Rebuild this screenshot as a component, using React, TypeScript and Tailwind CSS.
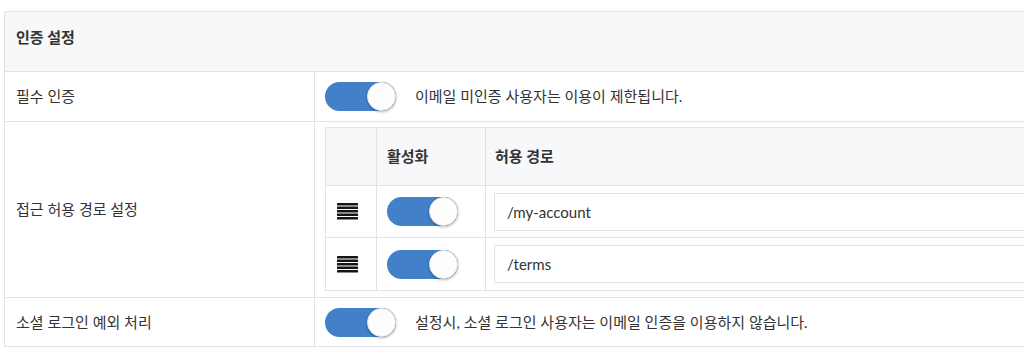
import React from 'react';

const border = 'border-[#e3e3e3]';

function Toggle() {
  return (
    <div className="flex h-[29px] w-[71px] justify-end rounded-full bg-[#4281c9]">
      <div className="h-[29px] w-[29px] rounded-full border border-[#e6e6e6] bg-[#fdfdfd] shadow-[0_1px_3px_rgba(0,0,0,0.3)]" />
    </div>
  );
}

function DragHandle() {
  return (
    <svg width="21" height="17" viewBox="0 0 21 17" fill="#151515">
      {[0, 3.5, 7, 10.5, 14].map((y) => (
        <rect key={y} x="0" y={y} width="21" height="2.5" rx="0.5" />
      ))}
    </svg>
  );
}

const paths = ['/my-account', '/terms'];

export default function App() {
  return (
    <div className="h-[358px] w-full overflow-hidden bg-white font-['Lato','Noto_Sans_CJK_KR',sans-serif] text-[15px] text-[#333]">
      <div className={`ml-[4px] mt-[11px] w-[1100px] border ${border}`}>
        {/* header */}
        <div className={`h-[60px] border-b ${border} bg-[#f7f8fa] pl-[11px] pt-[14px] font-bold leading-[22px]`}>
          인증 설정
        </div>

        {/* 필수 인증 */}
        <div className={`flex h-[50px] border-b ${border}`}>
          <div className={`flex w-[310px] items-center border-r ${border} pl-[11px]`}>필수 인증</div>
          <div className="flex items-center gap-[19px] pl-[10px]">
            <Toggle />
            <span>이메일 미인증 사용자는 이용이 제한됩니다.</span>
          </div>
        </div>

        {/* 접근 허용 경로 설정 */}
        <div className={`flex border-b ${border}`}>
          <div className={`flex w-[310px] items-center border-r ${border} pl-[11px]`}>접근 허용 경로 설정</div>
          <div className="flex-1 pb-[6px] pl-[10px] pt-[5px]">
            <div className={`border ${border}`}>
              <div className={`flex h-[58px] border-b ${border} bg-[#f7f8fa] font-bold`}>
                <div className={`w-[51px] border-r ${border}`} />
                <div className={`flex w-[109px] items-center border-r ${border} pl-[10px]`}>활성화</div>
                <div className="flex items-center pl-[9px]">허용 경로</div>
              </div>
              {paths.map((p, i) => (
                <div key={p} className={`flex h-[52px] ${i === 0 ? `border-b ${border}` : ''}`}>
                  <div className={`flex w-[51px] items-center border-r ${border} pl-[11px]`}>
                    <DragHandle />
                  </div>
                  <div className={`flex w-[109px] items-center border-r ${border} pl-[10px]`}>
                    <Toggle />
                  </div>
                  <div className="flex flex-1 items-center pl-[8px]">
                    <input
                      readOnly
                      value={p}
                      className={`h-[38px] w-full border ${border} bg-white px-[12px] text-[15px] text-[#333] outline-none`}
                    />
                  </div>
                </div>
              ))}
            </div>
          </div>
        </div>

        {/* 소셜 로그인 예외 처리 */}
        <div className="flex h-[48px]">
          <div className={`flex w-[310px] items-center border-r ${border} pl-[11px]`}>소셜 로그인 예외 처리</div>
          <div className="flex items-center gap-[19px] pl-[10px]">
            <Toggle />
            <span>설정시, 소셜 로그인 사용자는 이메일 인증을 이용하지 않습니다.</span>
          </div>
        </div>
      </div>
    </div>
  );
}
